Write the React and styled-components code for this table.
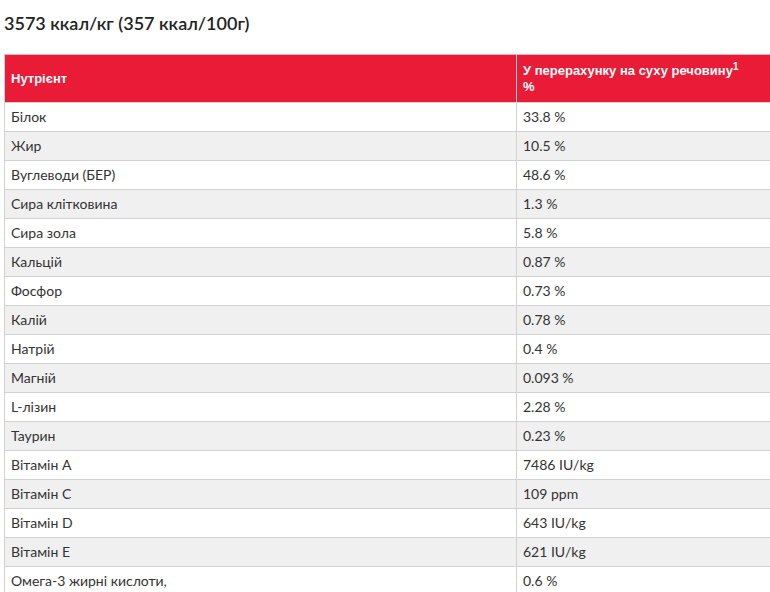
import React from 'react'
import styled, { createGlobalStyle } from 'styled-components'

const red = '#e91b37'
const line = '#d2d2d2'

const Global = createGlobalStyle`
  html, body {
    margin: 0;
    background: #fff;
    overflow: hidden;
  }
  body {
    font-family: Lato, 'Liberation Sans', sans-serif;
    color: #333;
  }
`
const Page = styled.div`
  padding: 11px 0 0 4px;
  width: 790px;
`
const Title = styled.h3`
  margin: 0 0 19px;
  font-size: 18px;
  line-height: 24px;
  font-weight: 600;
  color: #222;
`
const Table = styled.table`
  width: 100%;
  border-collapse: collapse;
  font-size: 14px;
`
const Head = styled.th`
  box-sizing: border-box;
  background: ${red};
  color: #fff;
  text-align: left;
  font-family: 'Liberation Sans', Arial, sans-serif;
  font-weight: 700;
  font-size: 13px;
  line-height: 16px;
  padding: 8px 6px 7px;
  height: 47px;
  border: 1px solid ${line};
  border-top-color: #e6b5bc;
  width: ${props => props.w || 'auto'};

  sup {
    font-size: 10px;
    line-height: 0;
  }
`
const Row = styled.tr`
  background: ${props => (props.odd ? '#f0f0f0' : '#fff')};
`
const Cell = styled.td`
  border: 1px solid ${line};
  padding: 0 6px;
  height: 28px;
  line-height: 18px;
  color: #333;
`

const rows = [
  ['Білок', '33.8 %'],
  ['Жир', '10.5 %'],
  ['Вуглеводи (БЕР)', '48.6 %'],
  ['Сира клітковина', '1.3 %'],
  ['Сира зола', '5.8 %'],
  ['Кальцій', '0.87 %'],
  ['Фосфор', '0.73 %'],
  ['Калій', '0.78 %'],
  ['Натрій', '0.4 %'],
  ['Магній', '0.093 %'],
  ['L-лізин', '2.28 %'],
  ['Таурин', '0.23 %'],
  ['Вітамін A', '7486 IU/kg'],
  ['Вітамін C', '109 ppm'],
  ['Вітамін D', '643 IU/kg'],
  ['Вітамін E', '621 IU/kg'],
  ['Омега-3 жирні кислоти,', '0.6 %'],
]

export default function App() {
  return (
    <Page>
      <Global />
      <Title>3573 ккал/кг (357 ккал/100г)</Title>
      <Table>
        <colgroup>
          <col style={{ width: 512 }} />
          <col />
        </colgroup>
        <thead>
          <tr>
            <Head>Нутрієнт</Head>
            <Head>
              У перерахунку на суху речовину<sup>1</sup>
              <br />%
            </Head>
          </tr>
        </thead>
        <tbody>
          {rows.map(([name, value], i) => (
            <Row key={name} odd={i % 2 === 1}>
              <Cell>{name}</Cell>
              <Cell>{value}</Cell>
            </Row>
          ))}
        </tbody>
      </Table>
    </Page>
  )
}
